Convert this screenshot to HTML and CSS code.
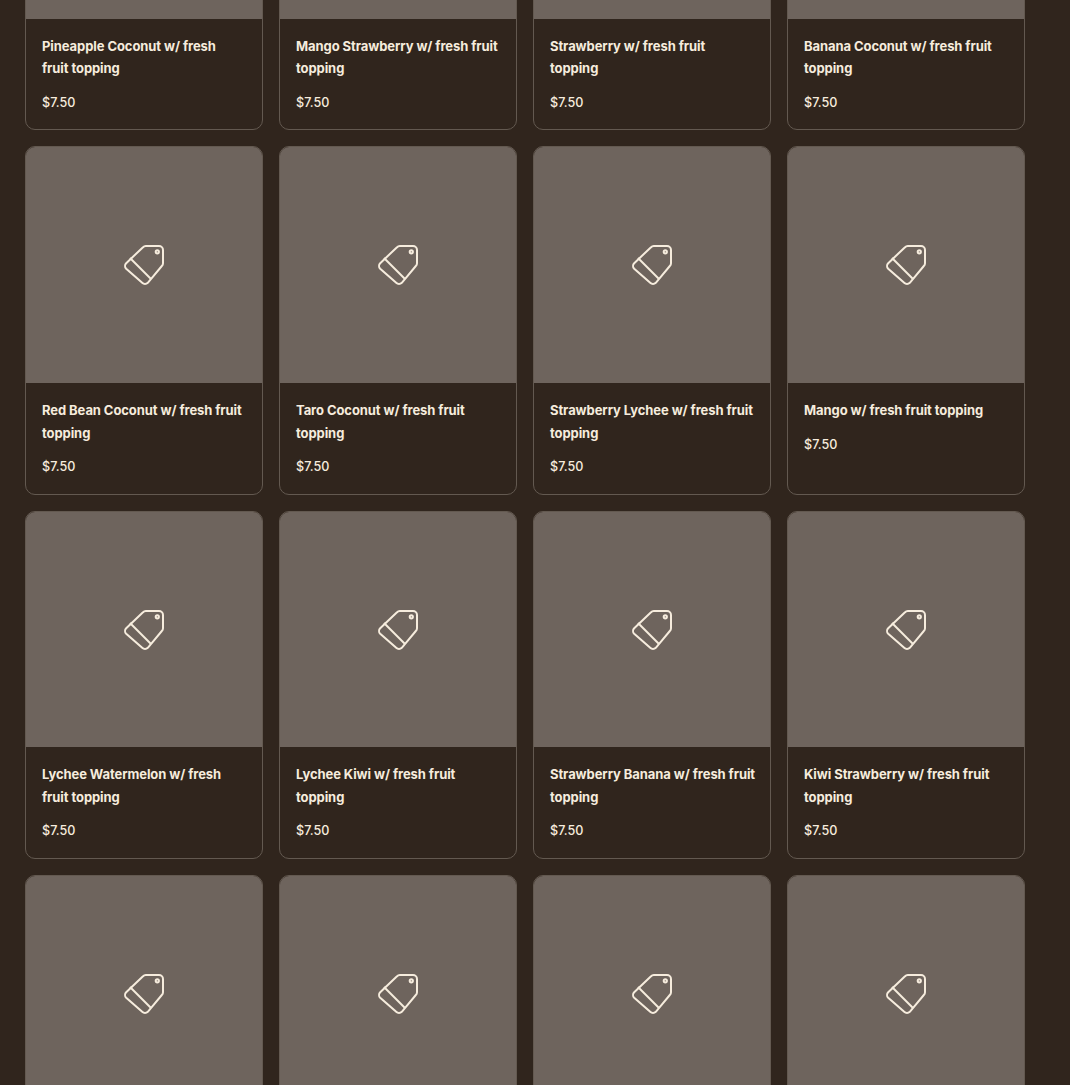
FILE: index.html
```html
<!DOCTYPE html>
<html lang="en">
<head>
  <meta charset="UTF-8" />
  <title>Menu</title>
  <link rel="stylesheet" href="styles.css">
</head>
<body>
  <svg class="sprite" width="0" height="0">
    <symbol id="tag" viewBox="0 0 42 42">
      <path d="M20 3.2 a4 4 0 0 1 2.8 -1.2 H36 a4 4 0 0 1 4 4 V19.2 a4 4 0 0 1 -1.2 2.8 L24.8 38.8 a4 4 0 0 1 -5.6 0 L3.2 24.8 a4 4 0 0 1 0 -5.6 Z" />
      <path d="M7 14 L28 35" />
      <circle class="dot" cx="34.3" cy="7.8" r="1.6" />
    </symbol>
  </svg>

  <div class="grid">
    <div class="card">
      <div class="thumb"><svg class="tag"><use href="#tag" /></svg></div>
      <div class="info"><h3>Pineapple Coconut w/ fresh<br>fruit topping</h3><p>$7.50</p></div>
    </div>
    <div class="card">
      <div class="thumb"><svg class="tag"><use href="#tag" /></svg></div>
      <div class="info"><h3>Mango Strawberry w/ fresh fruit topping</h3><p>$7.50</p></div>
    </div>
    <div class="card">
      <div class="thumb"><svg class="tag"><use href="#tag" /></svg></div>
      <div class="info"><h3>Strawberry w/ fresh fruit<br>topping</h3><p>$7.50</p></div>
    </div>
    <div class="card">
      <div class="thumb"><svg class="tag"><use href="#tag" /></svg></div>
      <div class="info"><h3>Banana Coconut w/ fresh fruit topping</h3><p>$7.50</p></div>
    </div>

    <div class="card">
      <div class="thumb"><svg class="tag"><use href="#tag" /></svg></div>
      <div class="info"><h3>Red Bean Coconut w/ fresh fruit topping</h3><p>$7.50</p></div>
    </div>
    <div class="card">
      <div class="thumb"><svg class="tag"><use href="#tag" /></svg></div>
      <div class="info"><h3>Taro Coconut w/ fresh fruit<br>topping</h3><p>$7.50</p></div>
    </div>
    <div class="card">
      <div class="thumb"><svg class="tag"><use href="#tag" /></svg></div>
      <div class="info"><h3>Strawberry Lychee w/ fresh fruit topping</h3><p>$7.50</p></div>
    </div>
    <div class="card">
      <div class="thumb"><svg class="tag"><use href="#tag" /></svg></div>
      <div class="info"><h3>Mango w/ fresh fruit topping</h3><p>$7.50</p></div>
    </div>

    <div class="card">
      <div class="thumb"><svg class="tag"><use href="#tag" /></svg></div>
      <div class="info"><h3>Lychee Watermelon w/ fresh<br>fruit topping</h3><p>$7.50</p></div>
    </div>
    <div class="card">
      <div class="thumb"><svg class="tag"><use href="#tag" /></svg></div>
      <div class="info"><h3>Lychee Kiwi w/ fresh fruit<br>topping</h3><p>$7.50</p></div>
    </div>
    <div class="card">
      <div class="thumb"><svg class="tag"><use href="#tag" /></svg></div>
      <div class="info"><h3>Strawberry Banana w/ fresh fruit topping</h3><p>$7.50</p></div>
    </div>
    <div class="card">
      <div class="thumb"><svg class="tag"><use href="#tag" /></svg></div>
      <div class="info"><h3>Kiwi Strawberry w/ fresh fruit topping</h3><p>$7.50</p></div>
    </div>

    <div class="card"><div class="thumb"><svg class="tag"><use href="#tag" /></svg></div></div>
    <div class="card"><div class="thumb"><svg class="tag"><use href="#tag" /></svg></div></div>
    <div class="card"><div class="thumb"><svg class="tag"><use href="#tag" /></svg></div></div>
    <div class="card"><div class="thumb"><svg class="tag"><use href="#tag" /></svg></div></div>
  </div>
</body>
</html>
```

FILE: styles.css
```css
* {
  margin: 0;
  padding: 0;
  box-sizing: border-box;
}
html, body {
  height: 1085px;
  overflow: hidden;
}
body {
  background: #30251d;
  color: #f6ecdd;
  font-family: 'Inter', 'Liberation Sans', sans-serif;
}
.sprite {
  display: block;
}
.grid {
  display: grid;
  grid-template-columns: repeat(4, 238px);
  gap: 16px;
  margin: -218.2px 0 0 25px;
}
.card {
  border: 1px solid #635950;
  border-radius: 10px;
  overflow: hidden;
}
.thumb {
  height: 235.9px;
  background: #6e645d;
  display: flex;
  align-items: center;
  justify-content: center;
}
.tag {
  width: 42px;
  height: 42px;
  fill: none;
  stroke: #f6ecdd;
  stroke-width: 2;
}
.tag .dot {
  fill: #f6ecdd;
  stroke: none;
}
.info {
  padding: 16px 14px 15.1px 16px;
}
.info h3 {
  font-size: 13px;
  font-weight: 700;
  line-height: 22.4px;
  letter-spacing: -0.08px;
}
.info p {
  font-size: 12.6px;
  font-weight: 500;
  line-height: 22.4px;
  margin-top: 12.2px;
}
```
